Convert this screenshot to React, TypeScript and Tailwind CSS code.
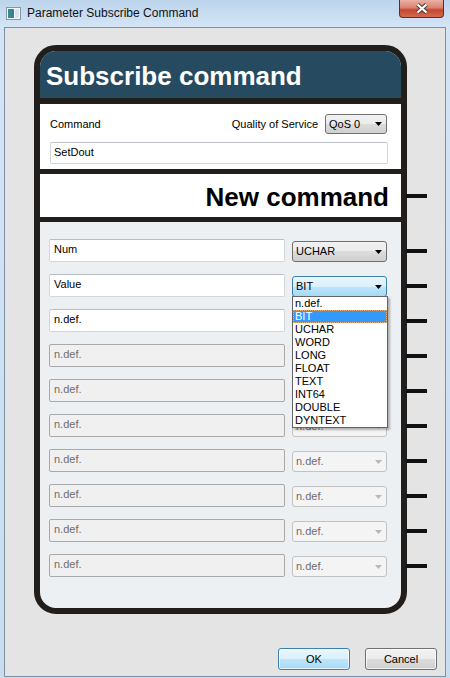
import React from 'react';

type SelVariant = 'normal' | 'open' | 'disabled';

function Arrow({ disabled }: { disabled?: boolean }) {
  return (
    <svg width="7" height="4" viewBox="0 0 7 4" className="shrink-0">
      <path d="M0 0H7L3.5 4Z" fill={disabled ? '#b8b8b8' : '#000'} />
    </svg>
  );
}

function Select({ value, variant, w = 'w-[95px]', h = 'h-[21px]' }: { value: string; variant: SelVariant; w?: string; h?: string }) {
  const styles: Record<SelVariant, string> = {
    normal:
      'border-[#707070] bg-[linear-gradient(#f2f2f2,#ebebeb_50%,#dddddd_50%,#cfcfcf)] text-black',
    open: 'border-[#3c7fb1] bg-[linear-gradient(#eaf6fd,#d9f0fc_50%,#bee6fd_50%,#a7d9f5)] text-black',
    disabled: 'border-[#c2c2c2] bg-[#f4f4f4] text-[#6d6d6d]',
  };
  return (
    <div
      className={`${w} ${h} rounded-[3px] border flex items-center justify-between pl-[3px] pr-[4px] text-[11px] leading-none ${styles[variant]}`}
    >
      <span>{value}</span>
      <Arrow disabled={variant === 'disabled'} />
    </div>
  );
}

function Connector({ extra = '' }: { extra?: string }) {
  return <div className={`w-[21px] h-[4px] bg-[#111] shrink-0 ${extra}`} />;
}

const OPTIONS = ['n.def.', 'BIT', 'UCHAR', 'WORD', 'LONG', 'FLOAT', 'TEXT', 'INT64', 'DOUBLE', 'DYNTEXT'];

function Dropdown() {
  return (
    <div className="absolute left-0 top-[20px] w-[96px] z-10 bg-white border border-[#646464] shadow-[2px_2px_2px_rgba(0,0,0,0.28)]">
      {OPTIONS.map((o) => (
        <div
          key={o}
          className={`h-[13px] leading-[13px] pl-[2px] text-[11px] ${
            o === 'BIT'
              ? 'bg-[#3399ff] text-white outline outline-1 outline-dotted outline-[#e9b070] -outline-offset-1'
              : 'text-black'
          }`}
        >
          {o}
        </div>
      ))}
    </div>
  );
}

type Row = { name: string; type: string; enabled: boolean; sel: SelVariant; open?: boolean };

const ROWS: Row[] = [
  { name: 'Num', type: 'UCHAR', enabled: true, sel: 'normal' },
  { name: 'Value', type: 'BIT', enabled: true, sel: 'open', open: true },
  { name: 'n.def.', type: 'n.def.', enabled: true, sel: 'normal' },
  { name: 'n.def.', type: 'n.def.', enabled: false, sel: 'disabled' },
  { name: 'n.def.', type: 'n.def.', enabled: false, sel: 'disabled' },
  { name: 'n.def.', type: 'n.def.', enabled: false, sel: 'disabled' },
  { name: 'n.def.', type: 'n.def.', enabled: false, sel: 'disabled' },
  { name: 'n.def.', type: 'n.def.', enabled: false, sel: 'disabled' },
  { name: 'n.def.', type: 'n.def.', enabled: false, sel: 'disabled' },
  { name: 'n.def.', type: 'n.def.', enabled: false, sel: 'disabled' },
];

function ParamRow({ row }: { row: Row }) {
  return (
    <div className="flex items-center h-[23px]">
      <div
        className={`w-[236px] h-[23px] shrink-0 rounded-[2px] border flex items-center pl-[4px] pb-[3px] text-[11px] leading-none ${
          row.enabled
            ? 'bg-white border-[#d3d6db] border-t-[#b9bcc2] text-black'
            : 'bg-[#f0f0f0] border-[#a9a9a9] text-[#6d6d6d]'
        }`}
      >
        {row.name}
      </div>
      <div className="ml-[7px] self-end relative shrink-0">
        <Select value={row.type} variant={row.sel} />
        {row.open && <Dropdown />}
      </div>
      <Connector extra="ml-[19px]" />
    </div>
  );
}

export default function App() {
  const dark = 'bg-[#221e1b]';
  return (
    <div className="w-[450px] h-[678px] flex flex-col bg-[linear-gradient(180deg,#bcd4ec,#d3e4f5_26px,#c9ddf1)] font-['Liberation_Sans',Arial,sans-serif] text-[11px] overflow-hidden">
      {/* title bar */}
      <div className="h-[27px] flex items-start shrink-0">
        <svg width="15" height="13" viewBox="0 0 15 13" className="ml-[6px] mt-[7px]">
          <rect x="0.5" y="0.5" width="14" height="12" fill="#f4f6f8" stroke="#8696aa" />
          <rect x="2" y="2" width="3" height="9" fill="#2f8f86" />
          <rect x="5" y="2" width="3" height="9" fill="#3f77b5" />
          <rect x="9" y="2" width="4" height="9" fill="#dde3ea" />
        </svg>
        <span className="ml-[6px] mt-[5px] text-[12px] leading-[16px] text-[#111]">Parameter Subscribe Command</span>
        <div className="ml-auto mr-[6px] w-[45px] h-[18px] rounded-b-[4px] border border-t-0 border-[#6b2a20] bg-[linear-gradient(#eab0a4,#d98471_45%,#c4472f_58%,#d46a50)] flex items-center justify-center">
          <svg width="14" height="11" viewBox="0 0 14 11">
            <path d="M2.5 1.5L11.5 9.5M11.5 1.5L2.5 9.5" stroke="#4a3a38" strokeWidth="4.2" />
            <path d="M2.5 1.5L11.5 9.5M11.5 1.5L2.5 9.5" stroke="#ffffff" strokeWidth="2.3" />
          </svg>
        </div>
      </div>

      {/* client area */}
      <div className="flex-1 mx-[4px] mb-[1px] border border-[#7d8fa3] bg-[#e4e4e4] flex flex-col">
        <div className="pl-[29px] pt-[17px]">
          <div className="w-[373px] h-[569px] border-[6px] border-[#221e1b] rounded-[22px] bg-[#edf0f3] flex flex-col">
            <div className="h-[47px] shrink-0 bg-[#264a5f] rounded-t-[16px] flex items-center pl-[6px] pt-[2px]">
              <span className="text-white font-bold text-[26px] leading-none">Subscribe command</span>
            </div>
            <div className={`h-[6px] shrink-0 ${dark}`} />
            <div className="h-[65px] shrink-0 bg-white pl-[10px] pr-[13px] pt-[10px]">
              <div className="flex items-center h-[20px]">
                <span className="text-black">Command</span>
                <span className="ml-auto text-black">Quality of Service</span>
                <div className="ml-[7px] mr-[1px]">
                  <Select value="QoS 0" variant="normal" w="w-[62px]" h="h-[20px]" />
                </div>
              </div>
              <div className="mt-[8px] h-[22px] rounded-[2px] border border-[#d3d6db] border-t-[#bfc2c8] flex items-center pl-[3px] pb-[2px] text-black">
                SetDout
              </div>
            </div>
            <div className={`h-[5px] shrink-0 ${dark}`} />
            <div className="h-[43px] shrink-0 bg-white flex items-center pt-[3px]">
              <div className="flex-1" />
              <span className="text-black font-bold text-[26px] leading-none">New command</span>
              <Connector extra="ml-[17px] mr-[-26px] -mt-[3px]" />
            </div>
            <div className={`h-[5px] shrink-0 ${dark}`} />
            <div className="flex-1 pt-[17px] pl-[9px] flex flex-col gap-[12px]">
              {ROWS.map((r, i) => (
                <ParamRow key={i} row={r} />
              ))}
            </div>
          </div>
        </div>

        <div className="mt-auto flex justify-end gap-[15px] pr-[8px] pb-[6px]">
          <button className="w-[72px] h-[22px] rounded-[3px] border border-[#3c7fb1] bg-[linear-gradient(#eaf6fd,#d9f0fc_50%,#bee6fd_50%,#a7d9f5)] text-[11px] text-black shadow-[inset_0_0_0_1px_rgba(255,255,255,0.7)]">
            OK
          </button>
          <button className="w-[72px] h-[22px] rounded-[3px] border border-[#707070] bg-[linear-gradient(#f2f2f2,#ebebeb_50%,#dddddd_50%,#cfcfcf)] text-[11px] text-black shadow-[inset_0_0_0_1px_rgba(255,255,255,0.7)]">
            Cancel
          </button>
        </div>
      </div>
    </div>
  );
}
